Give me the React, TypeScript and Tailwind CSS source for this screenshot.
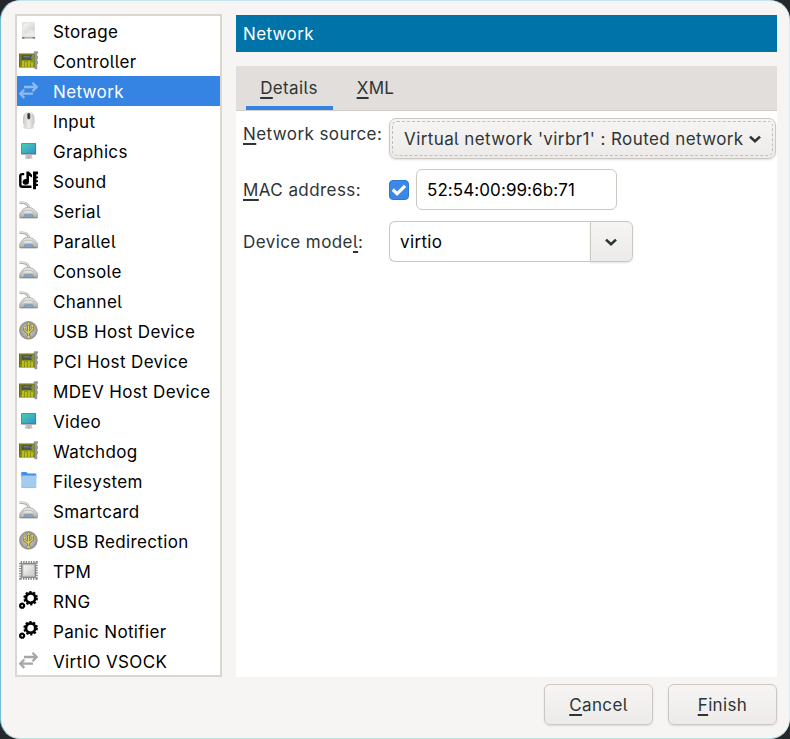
import React from "react";

type IconKind =
  | "disk" | "card" | "arrows" | "mouse" | "monitor" | "sound"
  | "serial" | "usb" | "folder" | "chip" | "gears";

const devices: { label: string; icon: IconKind }[] = [
  { label: "Storage", icon: "disk" },
  { label: "Controller", icon: "card" },
  { label: "Network", icon: "arrows" },
  { label: "Input", icon: "mouse" },
  { label: "Graphics", icon: "monitor" },
  { label: "Sound", icon: "sound" },
  { label: "Serial", icon: "serial" },
  { label: "Parallel", icon: "serial" },
  { label: "Console", icon: "serial" },
  { label: "Channel", icon: "serial" },
  { label: "USB Host Device", icon: "usb" },
  { label: "PCI Host Device", icon: "card" },
  { label: "MDEV Host Device", icon: "card" },
  { label: "Video", icon: "monitor" },
  { label: "Watchdog", icon: "card" },
  { label: "Filesystem", icon: "folder" },
  { label: "Smartcard", icon: "serial" },
  { label: "USB Redirection", icon: "usb" },
  { label: "TPM", icon: "chip" },
  { label: "RNG", icon: "gears" },
  { label: "Panic Notifier", icon: "gears" },
  { label: "VirtIO VSOCK", icon: "arrows" },
];

function Gradients() {
  return (
    <svg className="absolute h-0 w-0" aria-hidden="true">
      <defs>
        <linearGradient id="screen" x1="0" y1="0" x2="1" y2="1">
          <stop offset="0" stopColor="#45d0b0" />
          <stop offset="1" stopColor="#3590d2" />
        </linearGradient>
        <linearGradient id="metal" x1="0" y1="0" x2="1" y2="1">
          <stop offset="0" stopColor="#fafafa" />
          <stop offset="1" stopColor="#c9c9c6" />
        </linearGradient>
        <linearGradient id="plug" x1="0" y1="0" x2="0" y2="1">
          <stop offset="0" stopColor="#eeeeec" />
          <stop offset="1" stopColor="#aaaca8" />
        </linearGradient>
        <linearGradient id="mouse" x1="0" y1="0" x2="1" y2="0">
          <stop offset="0" stopColor="#c8c6c1" />
          <stop offset="0.5" stopColor="#efeeec" />
          <stop offset="1" stopColor="#c4c2bd" />
        </linearGradient>
        <radialGradient id="disc">
          <stop offset="0" stopColor="#d5d5d3" />
          <stop offset="0.8" stopColor="#a4a4a2" />
          <stop offset="1" stopColor="#858583" />
        </radialGradient>
      </defs>
    </svg>
  );
}

function DeviceIcon({ kind, active }: { kind: IconKind; active: boolean }) {
  const drawings: Record<IconKind, React.ReactNode> = {
    disk: (
      <>
        <rect x="3.1" y="1" width="12.9" height="15.5" rx="0.8" fill="#e4e4e2" />
        <ellipse cx="9.6" cy="7.2" rx="5.8" ry="5.8" fill="url(#metal)" />
        <path d="M4 15 12 8.5 15 10.5V15Z" fill="#efefed" opacity=".7" />
        <path d="M3 16h13v1.6H3Z" fill="#b1b1ae" />
        <path d="M3 16h2.4v1.6H3ZM13.6 16H16v1.6h-2.4Z" fill="#777" />
      </>
    ),
    card: (
      <>
        <rect x=".5" y="3" width="15.5" height="13" fill="#91951b" stroke="#666b20" />
        <path d="M1 4h2v10H1Z" fill="#7d821b" />
        <path d="M4 10v6.3M7 11v5.3M10 10v6.3M13 11v5.3" stroke="#bdc31b" strokeWidth="1.8" />
        <rect x="3" y="4.3" width="9.5" height="4.4" fill="#4b5453" stroke="#4b5437" strokeWidth=".7" />
        <path d="M4.5 5.8h6" stroke="#7e8b8c" />
        <circle cx="12.8" cy="6.6" r="1.2" fill="#4e91a6" />
        <path d="M15.2.8h3.5v1.3h-.9v15.7h-1.9V3.5h-.7Z" fill="#a3a3a0" stroke="#7b7e7b" strokeWidth=".7" />
        <path d="M18.4 5v3M18.4 10v3" stroke="#999" />
      </>
    ),
    arrows: (
      <g fill="none" stroke={active ? "#8eb9f2" : "#a6a6a6"} strokeWidth="2.3">
        <path d="M5 6h12M13.5 1.8 17.6 6l-4.1 4.2" />
        <path d="M14 12.7H1.8M5.3 8.5 1.2 12.7l4.1 4.2" />
      </g>
    ),
    mouse: (
      <>
        <ellipse cx="9.7" cy="16.2" rx="5.7" ry="1.7" fill="#deddda" />
        <rect x="4" y=".8" width="11.5" height="16.3" rx="5.75" fill="url(#mouse)" />
        <rect x="8.3" y="2" width="2.9" height="6.5" rx="1.45" fill="#484650" />
        <path d="M9.8 4v2.5" stroke="#222" />
      </>
    ),
    monitor: (
      <>
        <path d="M6.5 13.5h6.4v2.2h-2v2H8.5v-2h-2Z" fill="#bebcb8" />
        <path d="M6 16h7.4v1.5H6Z" fill="#aaa8a5" opacity=".75" />
        <rect x="2.2" y="2.2" width="15" height="11.9" rx=".5" fill="#c5c0bc" />
        <rect x="2.7" y="2.7" width="14" height="10.1" fill="url(#screen)" stroke="#555866" strokeWidth=".6" />
      </>
    ),
    sound: (
      <>
        <path d="M5.2 3.1H3.3Q1.3 3.1 1.3 5.1v8.6Q1.3 15.7 3.3 15.7h9.2" fill="none" stroke="#000" strokeWidth="2.4" />
        <path d="M7.4.5h2.5L13 3.8v2.8L10 4.8v6a3.2 2.8 0 1 1-2.6-2.7Z" fill="#000" />
        <path d="M14 .5h5v2.8h-1.6v2.2H19v1.8h-1.6v1.9H19v1.9h-1.6V13H19v2h-2v3.3h-3Z" fill="#000" />
      </>
    ),
    serial: (
      <>
        <path d="M.5 1.8c6.2-.3 9.3 1.4 9.2 5.6" fill="none" stroke="#aaa" strokeWidth="2.6" />
        <path d="M.5 1.4c5.9-.3 9.6 1.4 9.5 5.6" fill="none" stroke="#dededc" strokeWidth="1.1" />
        <path d="M4.5 7.8Q9.5 4.8 14.5 8l3.3 3.4q.8.7.8 2v3.4H.7v-3.3q0-1.1.9-1.9Z" fill="url(#plug)" stroke="#a3a4a2" strokeWidth=".8" />
        <path d="M3.5 10.9Q9 7.4 14.8 10.9L13.3 12.4H5Z" fill="#e3e3e2" stroke="#b3b3b1" strokeWidth=".7" />
        <path d="M1.2 16.7h17" stroke="#838784" />
        <path d="M5.8 13.8h7.7l.9 2.6H4.9Z" fill="#84a8d1" stroke="#71879f" strokeWidth=".7" />
      </>
    ),
    usb: (
      <>
        <circle cx="9.4" cy="9.3" r="9" fill="url(#disc)" stroke="#93938f" strokeWidth=".5" />
        <g stroke="#646342" strokeWidth="2.6" fill="none">
          <path d="M9.5 3v13M5.8 7v2.2l3.7 3.4M13.2 5.5v3.2L9.5 12" />
        </g>
        <g stroke="#e5d355" strokeWidth="1.4" fill="none">
          <path d="M9.5 3v13M5.8 7v2.2l3.7 3.4M13.2 5.5v3.2L9.5 12" />
        </g>
        <path d="m7.4 4 2.1-3.2L11.6 4Z" fill="#e9dc63" stroke="#666441" strokeWidth=".5" />
        <circle cx="9.5" cy="16" r="1.7" fill="#e3d25b" stroke="#666441" strokeWidth=".4" />
        <path d="M12 3.6h2.5v2.5H12Z" fill="#e8da62" stroke="#666441" strokeWidth=".4" />
        <circle cx="5.7" cy="6.7" r="1.4" fill="#e8da62" stroke="#666441" strokeWidth=".4" />
      </>
    ),
    folder: (
      <>
        <path d="M2.2 2Q2.2 1 3.2 1h4l1.7 1.6h7.4q1 0 1 1v3H2.2Z" fill="#438de6" />
        <rect x="2.2" y="4.4" width="15.2" height="12.5" rx="1" fill="#a4caee" />
        <path d="M2.7 16.6h14.2" stroke="#91b9df" strokeWidth=".7" />
      </>
    ),
    chip: (
      <>
        <rect x="1.7" y="1.7" width="15.4" height="15.4" fill="none" stroke="#858786" strokeWidth="3.2" strokeDasharray="1.4 1.1" />
        <rect x="2.5" y="2.5" width="14" height="14" rx="1" fill="#a8aaa8" stroke="#858785" />
        <rect x="4.2" y="4" width="10.8" height="10.8" fill="url(#metal)" stroke="#d2d3d1" strokeWidth=".7" />
      </>
    ),
    gears: (
      <g fill="none" stroke="#000">
        <circle cx="11.6" cy="7.1" r="4.7" strokeWidth="2.8" />
        <circle cx="11.6" cy="7.1" r="6.2" strokeWidth="2.2" strokeDasharray="2.1 1.795" />
        <circle cx="3.1" cy="14.7" r="1.9" strokeWidth="2.1" />
        <circle cx="3.1" cy="14.7" r="2.8" strokeWidth=".9" strokeDasharray="1.2 1" />
      </g>
    ),
  };
  return (
    <svg className="mb-[1px] h-[19px] w-[19px] shrink-0" viewBox="0 0 19 19">
      {drawings[kind]}
    </svg>
  );
}

function Key({ children }: { children: string }) {
  return (
    <span className="underline decoration-2 underline-offset-[2.5px] [text-decoration-skip-ink:none]">
      {children}
    </span>
  );
}

function Chevron() {
  return (
    <svg className="h-[10px] w-[14px] shrink-0" viewBox="0 0 14 10">
      <path d="m2 2.6 5 4.7 5-4.7" fill="none" stroke="#2e3436" strokeWidth="2.6" />
    </svg>
  );
}

const raised =
  "border border-[#cdc7c2] bg-linear-to-b from-[#f6f5f4] to-[#edebe9] shadow-[0_1px_2px_rgba(0,0,0,0.12)]";

export default function App() {
  return (
    <div className="h-[739px] w-[790px] overflow-hidden bg-[#25282a] font-[Inter,sans-serif] text-[17px] leading-[20px] tracking-[0.36px] text-[#2e3436] [font-feature-settings:'cv05']">
      <Gradients />
      <div className="flex h-[739px] flex-col rounded-[20px] border border-t-[#c4e3ee] border-r-[#d8eef1] border-b-[#b4e5df] border-l-[#72bed4] bg-[#f6f5f4] pt-[13px] pr-[12px] pl-[14px]">
        <main className="flex h-[663px] gap-[14px]">
          <ul className="w-[207px] shrink-0 border-2 border-[#dad6d2] bg-white text-black">
            {devices.map((d, i) => (
              <li
                key={d.label}
                className={
                  i === 2
                    ? "flex h-[30px] items-center gap-[15px] bg-[#3584e4] pl-[2px] text-white"
                    : "flex h-[30px] items-center gap-[15px] pl-[2px]"
                }
              >
                <DeviceIcon kind={d.icon} active={i === 2} />
                <span className="pt-px whitespace-nowrap">{d.label}</span>
              </li>
            ))}
          </ul>
          <section className="flex w-[541px] shrink-0 flex-col">
            <h1 className="mt-[1px] flex h-[37px] items-center bg-[#0073a9] pl-[7px] text-white">Network</h1>
            <div className="mt-[14px] flex h-[45px] shrink-0 border-b border-[#d2cdc9] bg-[#e1dedb] pl-[10px]">
              <div className="flex h-[44px] w-[87px] items-center justify-center border-b-4 border-[#3584e4] pt-[4px] pr-px">
                <span><Key>D</Key>etails</span>
              </div>
              <div className="flex w-[85px] items-center justify-center">
                <span><Key>X</Key>ML</span>
              </div>
            </div>
            <div className="flex-1 bg-white pt-[7px] pl-[7px]">
              <div className="flex h-[41px]">
                <label className="w-[146px] shrink-0 pt-[6px] tracking-[0.42px]"><Key>N</Key>etwork source:</label>
                <button className={`h-[41px] w-[387px] rounded-[7px] p-[2px] ${raised}`}>
                  <span className="flex h-full items-center justify-between rounded-[5px] border border-dashed border-[#c0bfbd] pr-[10px] pl-[11px] tracking-[0.4px] whitespace-nowrap">
                    Virtual network 'virbr1' : Routed network
                    <Chevron />
                  </span>
                </button>
              </div>
              <div className="mt-[10px] flex h-[41px] items-center">
                <label className="w-[146px] shrink-0 tracking-[0.42px]"><Key>M</Key>AC address:</label>
                <div className="flex h-[20px] w-[20px] items-center justify-center rounded-[4px] border border-[#2b78d8] bg-[#3d88e5]">
                  <svg className="h-[16px] w-[16px] shrink-0" viewBox="0 0 16 16">
                    <path d="m1.8 7.5 4.3 4.3 8-8" fill="none" stroke="white" strokeWidth="3.2" />
                  </svg>
                </div>
                <div className="ml-[7px] flex h-[41px] w-[201px] items-center rounded-[6px] border border-[#cdc7c2] bg-white pl-[10px] tracking-[0.08px] text-black">
                  52:54:00:99:6b:71
                </div>
              </div>
              <div className="mt-[11px] flex h-[41px] items-center">
                <label className="w-[146px] shrink-0 tracking-[0.42px]">Device mode<Key>l</Key>:</label>
                <div className="flex h-[41px] w-[201px] items-center rounded-l-[6px] border border-r-0 border-[#cdc7c2] bg-white pl-[10px] text-black">
                  virtio
                </div>
                <button className={`flex h-[41px] w-[43px] items-center justify-center rounded-r-[6px] pr-px ${raised}`}>
                  <Chevron />
                </button>
              </div>
            </div>
          </section>
        </main>
        <footer className="mt-[7px] flex justify-end gap-[15px]">
          <button className={`h-[41px] w-[109px] rounded-[6px] ${raised}`}><Key>C</Key>ancel</button>
          <button className={`h-[41px] w-[109px] rounded-[6px] ${raised}`}><Key>F</Key>inish</button>
        </footer>
      </div>
    </div>
  );
}
